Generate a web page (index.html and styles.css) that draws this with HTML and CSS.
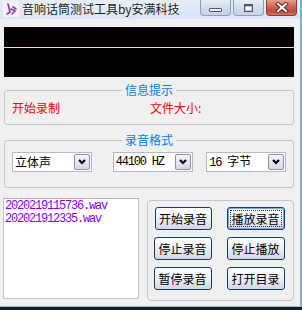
FILE: index.html
```html
<!DOCTYPE html>
<html>
<head>
<meta charset="utf-8">
<link rel="stylesheet" href="styles.css">
</head>
<body>
<div class="screen">
  <div class="window">
    <div class="titlebar">
      <div class="appicon">
        <svg width="16" height="16" viewBox="0 0 16 16">
          <rect x="0" y="0" width="16" height="16" fill="#f4f2f8"/>
          <path d="M5 3 L7 11 M7 11 L4 13 M8 8 L12 10 L9 13 M10 6 L13 8" stroke="#8a3d9a" stroke-width="1.6" fill="none" stroke-linecap="round"/>
        </svg>
      </div>
      <div class="title">音响话筒测试工具by安满科技</div>
      <div class="caption">
        <div class="cbtn"><span class="min-bar"></span></div>
        <div class="cbtn"><span class="max-box"></span></div>
        <div class="cbtn close">
          <svg width="14" height="11" viewBox="0 0 14 11">
            <path d="M3 2 L11 9 M11 2 L3 9" stroke="#5a2a25" stroke-width="4" stroke-linecap="square"/>
            <path d="M3 2 L11 9 M11 2 L3 9" stroke="#ffffff" stroke-width="2" stroke-linecap="square"/>
          </svg>
        </div>
      </div>
    </div>
    <div class="client">
      <div class="scope"></div>
      <fieldset class="group info">
        <legend>信息提示</legend>
        <div class="info-row"><span class="red">开始录制</span><span class="red">文件大小:</span></div>
      </fieldset>
      <fieldset class="group fmt">
        <legend>录音格式</legend>
        <div class="combos">
          <div class="combo c1"><span class="ctext">立体声</span><span class="drop"><svg width="10" height="8" viewBox="0 0 10 8"><path d="M2 2 L5 5 L8 2" stroke="#000" stroke-width="2.2" fill="none"/></svg></span></div>
          <div class="combo c2"><span class="ctext mono">44100 HZ</span><span class="drop"><svg width="10" height="8" viewBox="0 0 10 8"><path d="M2 2 L5 5 L8 2" stroke="#000" stroke-width="2.2" fill="none"/></svg></span></div>
          <div class="combo c3"><span class="ctext"><span class="mono">16 </span>字节</span><span class="drop"><svg width="10" height="8" viewBox="0 0 10 8"><path d="M2 2 L5 5 L8 2" stroke="#000" stroke-width="2.2" fill="none"/></svg></span></div>
        </div>
      </fieldset>
      <div class="bottom">
        <div class="list">
          <div class="item">2020219115736.wav</div>
          <div class="item">202021912335.wav</div>
        </div>
        <div class="btnbox">
          <div class="btn first">开始录音</div>
          <div class="btn focus">播放录音</div>
          <div class="btn">停止录音</div>
          <div class="btn">停止播放</div>
          <div class="btn">暂停录音</div>
          <div class="btn">打开目录</div>
        </div>
      </div>
    </div>
  </div>
  <div class="taskbar"></div>
</div>
</body>
</html>
```
FILE: styles.css
```css
html, body {
  margin: 0;
  padding: 0;
  background: #1c1c1c;
}
.screen {
  width: 302px;
  height: 310px;
  overflow: hidden;
  font-family: "Noto Sans CJK SC", "Noto Sans", sans-serif;
  font-size: 12px;
  background: #1c1c1c;
}
.window {
  width: 300px;
  border-right: 2px solid #6fb3e6;
  border-bottom: 1px solid #9fbad8;
  background: #f0f0f0;
}
.titlebar {
  height: 19px;
  display: flex;
  align-items: flex-start;
  background: linear-gradient(#e6eef8, #d9e5f4);
}
.appicon {
  width: 16px;
  height: 16px;
  margin: 1px 0 0 3px;
}
.appicon svg { display: block; }
.title {
  margin-left: 3px;
  line-height: 17px;
  font-size: 12px;
  color: #1a1a1a;
  flex: 1;
  text-shadow: 0 0 3px #fff;
}
.caption {
  display: flex;
  gap: 2px;
  margin-right: 3px;
}
.cbtn {
  width: 29px;
  height: 15px;
  border: 1px solid #8c9db5;
  border-top: none;
  border-radius: 0 0 4px 4px;
  background: linear-gradient(#e9f0f8, #d2dded 50%, #c3d3e8);
  display: flex;
  align-items: center;
  justify-content: center;
}
.min-bar {
  width: 11px;
  height: 2px;
  margin-top: 5px;
  background: #fff;
  border: 1px solid #4a5566;
  border-radius: 1px;
}
.max-box {
  width: 7px;
  height: 5px;
  border: 1px solid #4a5566;
  border-top-width: 2px;
  background: #fff;
  box-shadow: inset 0 0 0 1px #c0c8d6;
}
.close {
  border-color: #8e3a31;
  background: linear-gradient(#e7a08f, #cf5e4e 50%, #c44a3a 75%, #d77563);
}
.close svg { display: block; }
.client {
  padding: 8px 6px 5px 4px;
}
.scope {
  height: 50px;
  background: linear-gradient(#000 20px, #ffff00 20px, #ffff00 21px, #000 21px);
}
.group {
  margin: 0;
  border: 1px solid #c6c6c6;
  border-radius: 3px;
  min-width: 0;
}
.group legend {
  margin: 0 auto;
  padding: 0 3px;
  line-height: 14px;
  color: #0a7cf5;
}
.info {
  margin-top: 6px;
  padding: 4px 7px 9px 7px;
}
.info-row {
  display: grid;
  grid-template-columns: 138px auto;
  line-height: 14px;
}
.red { color: #ff0000; }
.fmt {
  margin-top: 8px;
  padding: 5px 7px 15px 7px;
}
.combos {
  display: flex;
}
.combo {
  height: 18px;
  border: 1px solid #b6b8cc;
  background: #fff;
  display: flex;
  align-items: center;
  justify-content: space-between;
}
.c1 { width: 78px; }
.c2 { width: 79px; margin-left: 21px; }
.c3 { width: 78px; margin-left: 13px; }
.ctext {
  padding-left: 2px;
  line-height: 14px;
  white-space: pre;
  color: #000;
}
.mono {
  font-family: "Liberation Mono", monospace;
  font-size: 12px;
  letter-spacing: -1.2px;
}
.drop {
  width: 14px;
  height: 14px;
  margin-right: 1px;
  border: 1px solid #8d8fae;
  border-radius: 2px;
  background: linear-gradient(#f6f6fa, #d6d7e6);
  display: flex;
  align-items: center;
  justify-content: center;
}
.drop svg { display: block; }
.bottom {
  margin-top: 10px;
  display: flex;
  align-items: flex-start;
  gap: 8px;
}
.list {
  margin-left: -1px;
  width: 134px;
  height: 99px;
  border: 1px solid #c2c4c8;
  border-top-color: #a9abb0;
  background: #fff;
  padding: 0;
}
.item {
  font-family: "Liberation Mono", monospace;
  font-size: 12px;
  letter-spacing: -1.2px;
  line-height: 13px;
  color: #8a00ff;
  padding-left: 1px;
}
.item:first-child { margin-top: 1px; }
.btnbox {
  margin-top: 2px;
  width: 140px;
  height: 93px;
  border: 1px solid #c6c6c6;
  border-radius: 4px;
  padding: 6px 0 0 6px;
  display: grid;
  grid-template-columns: 58px 58px;
  grid-auto-rows: 23px;
  column-gap: 15px;
  row-gap: 7px;
  align-content: start;
}
.btn {
  border: 1px solid #0b3f72;
  border-radius: 3px;
  background: linear-gradient(#ffffff, #f1f0f5 45%, #d7d5e3);
  display: flex;
  align-items: center;
  justify-content: center;
  color: #000;
  line-height: 14px;
  box-sizing: border-box;
}
.btn.first { margin-left: 1px; }
.btn.focus {
  box-shadow: inset 0 0 0 1px #7aa6e6;
  outline: 1px dotted #333;
  outline-offset: -4px;
}
.taskbar {
  height: 5px;
  background: #1c1c1c;
}
```
